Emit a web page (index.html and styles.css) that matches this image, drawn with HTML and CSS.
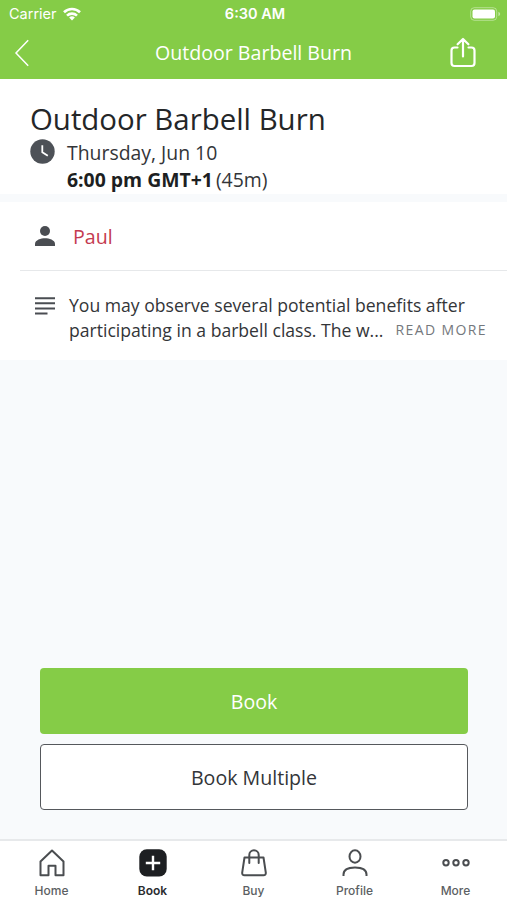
FILE: index.html
```html
<!DOCTYPE html>
<html lang="en">
<head>
<meta charset="utf-8">
<title>Outdoor Barbell Burn</title>
<link rel="stylesheet" href="styles.css">
</head>
<body>
<div class="screen">
  <header class="top">
    <div class="status">
      <div class="carrier"><span>Carrier</span>
        <svg width="18" height="14" viewBox="0 0 18 14" fill="none" stroke="#fff" stroke-width="2.6"><path d="M1 5.2a11.5 11.5 0 0 1 16 0"/><path d="M4 8.6a7.2 7.2 0 0 1 10 0"/><path d="M9 13.6l-2.9-3a4.1 4.1 0 0 1 5.8 0z" fill="#fff" stroke="none"/></svg>
      </div>
      <div class="clock">6:30 AM</div>
      <div class="power"><svg width="31" height="14" viewBox="0 0 31 14"><rect x=".7" y=".7" width="26" height="12.6" rx="3.6" fill="none" stroke="#fff" stroke-opacity=".4"/><rect x="2.5" y="2.4" width="22.5" height="9.2" rx="2" fill="#fff"/><path d="M28.4 4.8v4.4q1.8-.8 1.8-2.2t-1.8-2.2z" fill="#fff" fill-opacity=".5"/></svg></div>
    </div>
    <nav class="bar">
      <svg class="back" width="16" height="28" viewBox="0 0 16 28" fill="none" stroke="#fff" stroke-width="1.5"><path d="M14.2 1.2L2 14l12.2 12.8"/></svg>
      <div class="bar-title">Outdoor Barbell Burn</div>
      <svg class="share" width="28" height="32" viewBox="0 0 28 32" fill="none" stroke="#fff" stroke-width="2.2" stroke-linecap="round" stroke-linejoin="round"><path d="M8.5 10.5H5.5Q2.5 10.5 2.5 13.5V26q0 3 3 3h17q3 0 3-3V13.500q0-3-3-3H19.500M14 19.500V2.200M8.600 7.300L14 2l5.400 5.300"/></svg>
    </nav>
  </header>
  <section class="intro">
    <h1>Outdoor Barbell Burn</h1>
    <div class="when">
      <svg width="25" height="25" viewBox="0 0 25 25"><circle cx="12.500" cy="12.500" r="12.200" fill="#4d5157"/><path d="M12.300 6.300V13.200l5.500 3.600" fill="none" stroke="#fff" stroke-width="1.800"/></svg>
      <div class="times"><div class="date">Thursday, Jun 10</div><div class="time"><b>6:00 pm GMT+1</b><span>(45m)</span></div></div>
    </div>
  </section>
  <section class="details">
    <div class="row coach">
      <svg width="20" height="20" viewBox="0 0 20 20" fill="#4a4d52"><circle cx="10" cy="5" r="5"/><path d="M0 20v-2.300C0 14 6 12.200 10 12.200s10 1.800 10 5.500V20z"/></svg>
      <a class="name">Paul</a>
    </div>
    <div class="row about">
      <svg width="20" height="18" viewBox="0 0 20 18" stroke="#4a4d52" stroke-width="2"><path d="M0 1.200h20M0 6.300h20M0 11.400h20M0 16.500h12.500"/></svg>
      <div class="copy"><div class="line">You may observe several potential benefits after</div><div class="line last"><span>participating in a barbell class. The w...</span><a class="more">READ MORE</a></div></div>
    </div>
  </section>
  <main class="actions">
    <button class="btn primary">Book</button>
    <button class="btn outline">Book Multiple</button>
  </main>
  <footer class="tabs">
    <div class="tab"><svg width="28" height="28" viewBox="0 0 28 28" fill="none" stroke="#4a4d50" stroke-width="2" stroke-linejoin="round"><path d="M2.500 26.200V12.500L14 1.500l11.500 11v13.700h-8v-9.500h-7v9.500z"/></svg><span>Home</span></div>
    <div class="tab active"><svg width="28" height="28" viewBox="0 0 28 28"><rect x=".3" y=".3" width="27.400" height="27.200" rx="7.500" fill="#1d1f22"/><path d="M14 6.800v14.400M6.800 14h14.400" stroke="#fff" stroke-width="2.400"/></svg><span>Book</span></div>
    <div class="tab"><svg width="28" height="28" viewBox="0 0 28 28" fill="none" stroke="#4a4d50" stroke-width="2" stroke-linecap="round" stroke-linejoin="round"><path d="M4.500 8.500h19l2.300 15.200q.2 2.500-2.300 2.500H4.500q-2.500 0-2.300-2.500zM9.300 14V6a4.700 4.700 0 0 1 9.400 0v8"/></svg><span>Buy</span></div>
    <div class="tab"><svg width="28" height="28" viewBox="0 0 28 28" fill="none" stroke="#4a4d50" stroke-width="2"><ellipse cx="14" cy="7.500" rx="5.500" ry="6.200"/><path d="M2.500 27v-1.500C2.500 21 7 18.500 14 18.500s11.500 2.500 11.500 7V27"/></svg><span>Profile</span></div>
    <div class="tab"><svg width="28" height="28" viewBox="0 0 28 28" fill="none" stroke="#4a4d50" stroke-width="2"><circle cx="4" cy="13.800" r="2.700"/><circle cx="14" cy="13.800" r="2.700"/><circle cx="24" cy="13.800" r="2.700"/></svg><span>More</span></div>
  </footer>
</div>
</body>
</html>
```
FILE: styles.css
```css
* { box-sizing: border-box; }
body { margin: 0; font-family: "Open Sans", "Noto Sans", sans-serif; color: #333538; }
svg { display: block; flex: none; }
.screen { width: 507px; height: 900px; display: flex; flex-direction: column; background: #f8fafc; overflow: hidden; }
.top { height: 79px; flex: none; background: #85cc47; color: #fff; }
.status { height: 27px; display: grid; grid-template-columns: 1fr auto 1fr; align-items: center; padding: 0 6px 0 9px; font: 14.5px/27px Inter, sans-serif; }
.carrier { display: flex; align-items: center; gap: 6px; }
.clock { font-weight: 600; }
.power { justify-self: end; }
.bar { height: 52px; display: grid; grid-template-columns: 60px 1fr 60px; align-items: center; padding: 0 14px; }
.bar-title { font-size: 19.6px; line-height: 50px; text-align: center; white-space: nowrap; }
.share { justify-self: center; }
.intro { height: 115px; flex: none; padding: 20px 0 0 30px; background: #fff; }
h1 { margin: 0; font-size: 29.4px; font-weight: 400; line-height: 40px; color: #242628; white-space: nowrap; }
.when { display: flex; gap: 12px; font-size: 19.4px; line-height: 27px; }
.time { display: flex; gap: 3px; }
.time b { color: #1d1f22; }
.details { margin-top: 8px; height: 158px; flex: none; background: #fff; }
.row { display: flex; }
.coach { height: 69px; margin-left: 20px; padding-left: 15px; align-items: center; gap: 18px; border-bottom: 1px solid #e6e8ea; }
.name { font-size: 19.6px; color: #c43a50; }
.about { padding: 22px 20px 0 35px; gap: 14px; }
.about svg { margin-top: 4px; }
.copy { flex: 1; font-size: 17.6px; line-height: 24.500px; white-space: nowrap; }
.last { display: flex; justify-content: space-between; }
.more { font-size: 14px; letter-spacing: 1.4px; color: #74787d; }
.actions { flex: 1; display: flex; flex-direction: column; justify-content: flex-end; gap: 10px; padding: 0 39px 29px 40px; }
.btn { height: 66px; border-radius: 4px; font: 19.6px "Open Sans", sans-serif; padding: 0; }
.primary { background: #85cc47; color: #fff; border: 0; }
.outline { background: #fff; color: #333538; border: 1.5px solid #55585c; }
.tabs { height: 61px; flex: none; display: grid; grid-template-columns: repeat(5, 101px); justify-content: center; background: #fff; border-top: 2px solid #e7e9eb; }
.tab { display: flex; flex-direction: column; align-items: center; padding-top: 8px; gap: 6px; font: 500 12px/16px Inter, sans-serif; color: #5c5f63; }
.active { color: #2a2c2f; font-weight: 600; }
```
